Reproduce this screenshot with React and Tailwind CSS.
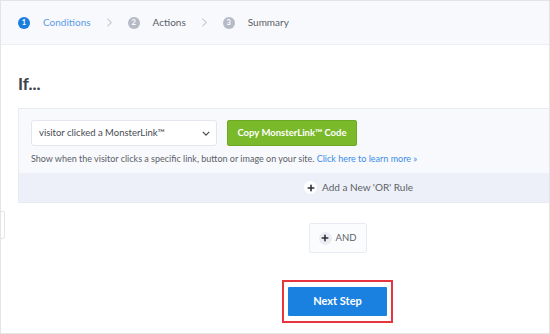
import React from "react";

const Plus = ({ className }) => (
  <svg viewBox="0 0 10 10" className={className}>
    <path d="M5 1.5v7M1.5 5h7" stroke="currentColor" strokeWidth="2" strokeLinecap="round" />
  </svg>
);

const Chevron = () => (
  <svg viewBox="0 0 8 12" className="w-[7px] h-[11px] text-[#c9cdd6]">
    <path d="M1.5 1.5L6 6l-4.5 4.5" fill="none" stroke="currentColor" strokeWidth="1.4" />
  </svg>
);

function Step({ n, label, active }) {
  return (
    <div className="flex items-center gap-[13px]">
      <span
        className={`w-[12px] h-[12px] rounded-full flex items-center justify-center text-[7.5px] font-bold text-white ${
          active ? "bg-[#1a7ddf]" : "bg-[#b5bac6]"
        }`}
      >
        {n}
      </span>
      <span className={`text-[10px] ${active ? "text-[#5a9be6]" : "text-[#5b5f66]"}`}>{label}</span>
    </div>
  );
}

export default function App() {
  return (
    <div
      className="w-[550px] h-[334px] bg-white border border-[#e3e4e6] overflow-hidden flex flex-col"
      style={{ fontFamily: "Lato, 'Open Sans', sans-serif" }}
    >
      <div className="h-[44px] shrink-0 bg-[#f8f9fd] border-b border-[#eceef3] flex items-center pl-[17px] gap-[15px]">
        <Step n="1" label="Conditions" active />
        <Chevron />
        <Step n="2" label="Actions" />
        <Chevron />
        <Step n="3" label="Summary" />
      </div>

      <div className="flex relative flex-1">
        <div className="absolute left-[-1px] top-[166px] w-[5px] h-[28px] border border-[#e3e5ea] rounded-r-[2px]" />
        <div className="flex-1 pl-[17px] flex flex-col">
          <h1 className="mt-[29px] text-[17px] font-bold text-[#3d4148] leading-[20px]">If...</h1>
          <div className="mt-[14px] bg-[#f8f9fd] border border-r-0 border-[#e8ebf2]">
            <div className="px-[12px] pt-[11px] pb-[8px]">
              <div className="flex gap-[10px]">
                <div className="w-[186px] h-[26px] bg-white border border-[#e3e6ec] rounded-[3px] flex items-center justify-between pl-[7px] pr-[6px]">
                  <span className="text-[9.5px] text-[#474b52]">visitor clicked a MonsterLink™</span>
                  <svg viewBox="0 0 10 6" className="w-[8px] h-[5px]">
                    <path d="M1 1l4 4 4-4" fill="none" stroke="#44484f" strokeWidth="1.5" />
                  </svg>
                </div>
                <button className="w-[130px] h-[26px] bg-[#7ab929] border border-[#6fa823] rounded-[2px] text-white text-[9.5px] font-bold">
                  Copy MonsterLink™ Code
                </button>
              </div>
              <p className="mt-[7px] text-[9px] text-[#5b5f66] leading-[12px]">
                Show when the visitor clicks a specific link, button or image on your site.{" "}
                <span className="text-[#3a8ce6]">Click here to learn more »</span>
              </p>
            </div>
            <div className="h-[29px] bg-[#edf0f8] flex items-center pl-[285px] gap-[5px]">
              <span className="w-[13px] h-[13px] rounded-full bg-white flex items-center justify-center">
                <Plus className="w-[8px] h-[8px] text-[#2d3036]" />
              </span>
              <span className="text-[10px] text-[#5b5f66]">Add a New 'OR' Rule</span>
            </div>
          </div>
          <div className="flex justify-center mt-[20px] pl-[108px]">
            <div className="w-[58px] h-[30px] bg-[#fbfcfe] border border-[#e8ebf2] rounded-[2px] flex items-center justify-center gap-[4px]">
              <span className="w-[13px] h-[13px] rounded-full bg-[#eceef4] flex items-center justify-center">
                <Plus className="w-[8px] h-[8px] text-[#2d3036]" />
              </span>
              <span className="text-[9.5px] text-[#5b5f66]">AND</span>
            </div>
          </div>
          <div className="flex justify-center mt-[27px] pl-[108px]">
            <div className="border-2 border-[#e8343c] px-[4px] py-[5px]">
              <button className="w-[99px] h-[29px] bg-[#1a81e0] rounded-[1px] text-white text-[11px] font-bold">
                Next Step
              </button>
            </div>
          </div>
        </div>
      </div>
    </div>
  );
}
